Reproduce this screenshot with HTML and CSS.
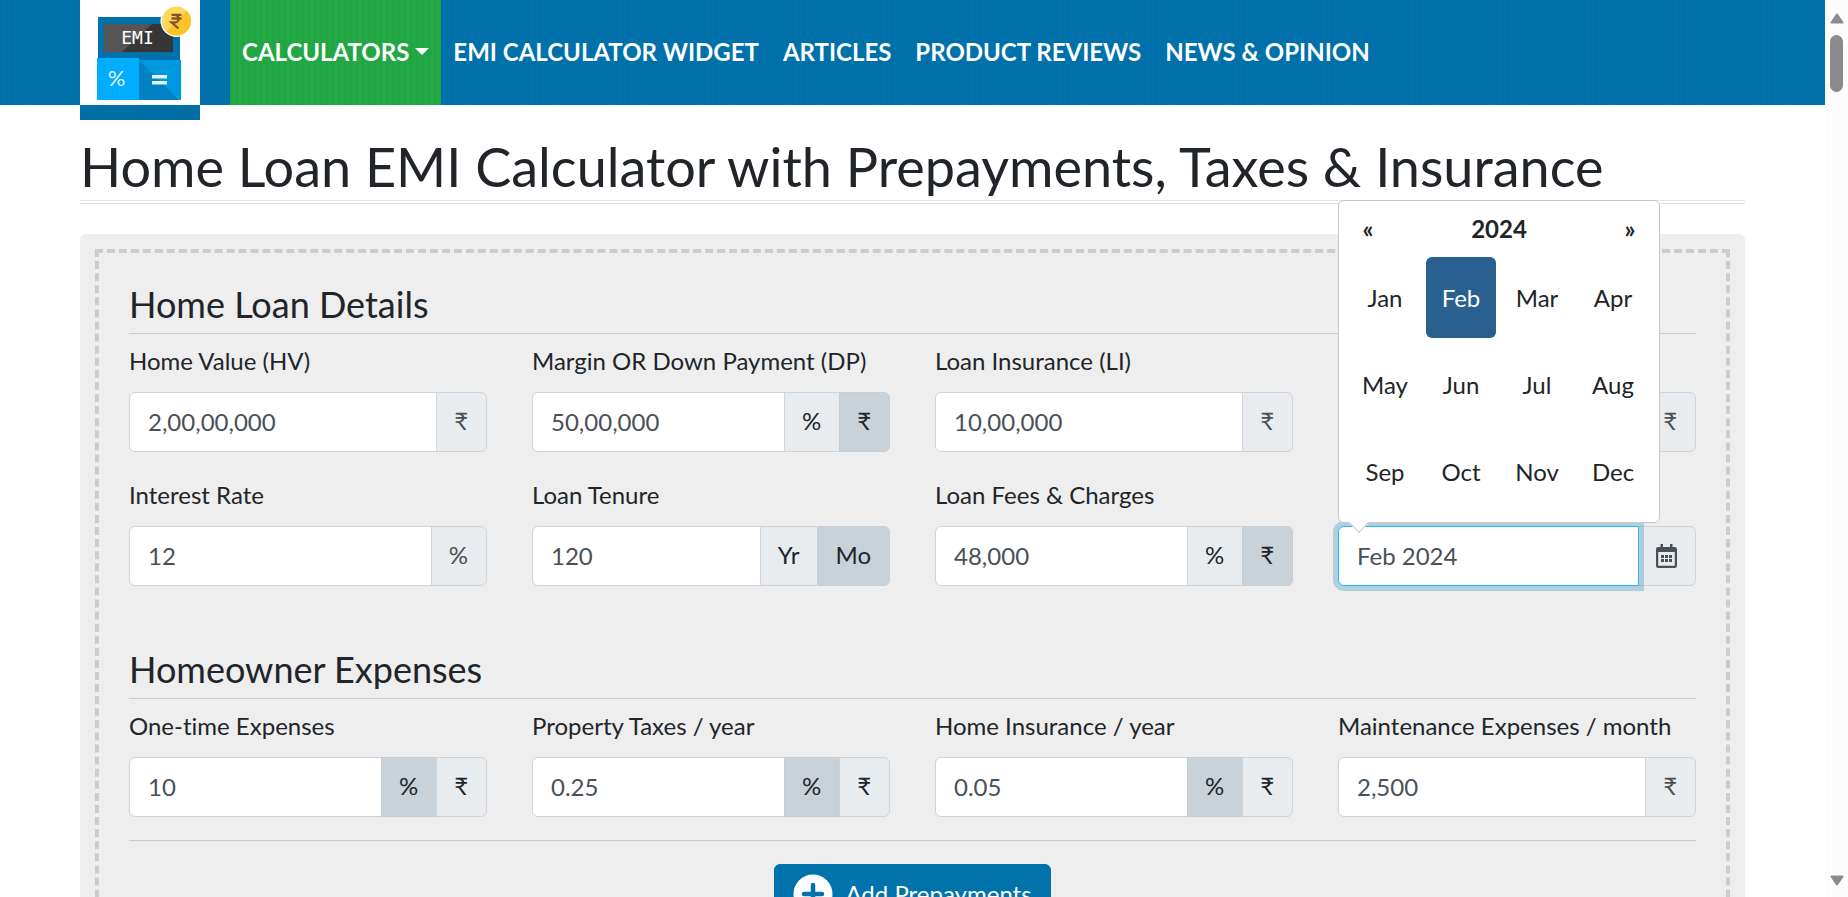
FILE: index.html
```html
<!DOCTYPE html>
<html lang="en">
<head>
<meta charset="utf-8">
<title>Home Loan EMI Calculator</title>
<link rel="stylesheet" href="styles.css">
</head>
<body>
<div class="page">
  <header class="site-header">
    <a class="brand" href="#" aria-label="EMI Calculator home">
      <svg class="brand-logo" viewBox="0 0 120 104" aria-hidden="true">
        <rect x="18" y="17" width="82" height="43" fill="#0070aa"/>
        <rect x="24" y="24" width="69" height="28" fill="#555"/>
        <path d="M72 24h21v28H42z" fill="#363636"/>
        <rect x="17" y="58" width="42" height="42" fill="#00adff"/>
        <rect x="59" y="60" width="42" height="40" fill="#0098e0"/>
        <path d="M59 60l40 40H59z" fill="#0081c2"/>
        <text x="57.500" y="44" class="logo-emi">EMI</text>
        <text x="36.500" y="86" class="logo-percent">%</text>
        <path d="M72 75h15v3.500H72zM72 81h15v3.500H72z" fill="#e4f3fc"/>
        <circle cx="96.500" cy="21" r="16" fill="#fff"/>
        <circle cx="96.500" cy="21" r="14.500" fill="#ffd85a"/>
        <path d="M107 11a14.500 14.500 0 0 1-20.500 20.500z" fill="#fcc324"/>
        <path d="M91.500 14.800h10M91.500 18.500h10M91.500 14.800h3c5.500 0 5.500 7.700 0 7.700h-3l7 6" fill="none" stroke="#845426" stroke-width="2.300"/>
      </svg>
    </a>
    <nav class="nav">
      <a class="nav-link nav-link-active" href="#">CALCULATORS<span class="caret"></span></a>
      <a class="nav-link" href="#">EMI CALCULATOR WIDGET</a>
      <a class="nav-link" href="#">ARTICLES</a>
      <a class="nav-link" href="#">PRODUCT REVIEWS</a>
      <a class="nav-link" href="#">NEWS &amp; OPINION</a>
    </nav>
  </header>
  <main class="content">
    <h1 class="title">Home Loan EMI Calculator with Prepayments, Taxes &amp; Insurance</h1>
    <div class="panel">
      <form class="calculator">
        <section class="section">
          <h2 class="section-title">Home Loan Details</h2>
          <div class="fields">
            <div class="field">
              <label class="label" for="home-value">Home Value (HV)</label>
              <div class="group"><input class="input" id="home-value" type="text" value="2,00,00,000"><span class="addon">₹</span></div>
            </div>
            <div class="field">
              <label class="label" for="down-payment">Margin OR Down Payment (DP)</label>
              <div class="group"><input class="input" id="down-payment" type="text" value="50,00,000"><button class="unit" type="button">%</button><button class="unit unit-on" type="button">₹</button></div>
            </div>
            <div class="field">
              <label class="label" for="loan-insurance">Loan Insurance (LI)</label>
              <div class="group"><input class="input" id="loan-insurance" type="text" value="10,00,000"><span class="addon">₹</span></div>
            </div>
            <div class="field">
              <label class="label" for="loan-amount">Loan Amount</label>
              <div class="group"><input class="input" id="loan-amount" type="text"><span class="addon">₹</span></div>
            </div>
            <div class="field">
              <label class="label" for="interest">Interest Rate</label>
              <div class="group"><input class="input" id="interest" type="text" value="12"><span class="addon">%</span></div>
            </div>
            <div class="field">
              <label class="label" for="tenure">Loan Tenure</label>
              <div class="group"><input class="input" id="tenure" type="text" value="120"><button class="unit" type="button">Yr</button><button class="unit unit-on" type="button">Mo</button></div>
            </div>
            <div class="field">
              <label class="label" for="fees">Loan Fees &amp; Charges</label>
              <div class="group"><input class="input" id="fees" type="text" value="48,000"><button class="unit" type="button">%</button><button class="unit unit-on" type="button">₹</button></div>
            </div>
            <div class="field">
              <label class="label" for="start-month">Start Month</label>
              <div class="group">
                <input class="input input-focus" id="start-month" type="text" value="Feb 2024">
                <span class="addon addon-icon">
                  <svg class="calendar-icon" viewBox="0 0 21 24" aria-hidden="true">
                    <path fill-rule="evenodd" d="M4.500 0h2.500v3h7V0h2.500v3h2.300A2.200 2.200 0 0 1 21 5.200v16.600a2.200 2.200 0 0 1-2.200 2.200H2.200A2.200 2.200 0 0 1 0 21.800V5.200A2.200 2.200 0 0 1 2.200 3h2.300zM2.200 8v13.200c0 .4.200.6.600.6h15.400c.4 0 .6-.2.600-.6V8z"/>
                    <path d="M5 11h3v3H5zM9 11h3v3H9zM13 11h3v3h-3zM5 15h3v3H5zM9 15h3v3H9zM13 15h3v3h-3z"/>
                  </svg>
                </span>
                <div class="picker">
                  <div class="picker-head">
                    <button class="picker-nav" type="button">«</button>
                    <span class="picker-year">2024</span>
                    <button class="picker-nav" type="button">»</button>
                  </div>
                  <div class="months">
                    <button class="month" type="button">Jan</button>
                    <button class="month month-on" type="button">Feb</button>
                    <button class="month" type="button">Mar</button>
                    <button class="month" type="button">Apr</button>
                    <button class="month" type="button">May</button>
                    <button class="month" type="button">Jun</button>
                    <button class="month" type="button">Jul</button>
                    <button class="month" type="button">Aug</button>
                    <button class="month" type="button">Sep</button>
                    <button class="month" type="button">Oct</button>
                    <button class="month" type="button">Nov</button>
                    <button class="month" type="button">Dec</button>
                  </div>
                </div>
              </div>
            </div>
          </div>
        </section>
        <section class="section">
          <h2 class="section-title">Homeowner Expenses</h2>
          <div class="fields">
            <div class="field">
              <label class="label" for="one-time">One-time Expenses</label>
              <div class="group"><input class="input" id="one-time" type="text" value="10"><button class="unit unit-on" type="button">%</button><button class="unit" type="button">₹</button></div>
            </div>
            <div class="field">
              <label class="label" for="taxes">Property Taxes / year</label>
              <div class="group"><input class="input" id="taxes" type="text" value="0.25"><button class="unit unit-on" type="button">%</button><button class="unit" type="button">₹</button></div>
            </div>
            <div class="field">
              <label class="label" for="home-insurance">Home Insurance / year</label>
              <div class="group"><input class="input" id="home-insurance" type="text" value="0.05"><button class="unit unit-on" type="button">%</button><button class="unit" type="button">₹</button></div>
            </div>
            <div class="field">
              <label class="label" for="maintenance">Maintenance Expenses / month</label>
              <div class="group"><input class="input" id="maintenance" type="text" value="2,500"><span class="addon">₹</span></div>
            </div>
          </div>
        </section>
        <div class="actions">
          <button class="add" type="button">
            <svg class="add-icon" viewBox="0 0 40 40" aria-hidden="true"><circle cx="20" cy="20" r="19.500" fill="#fff"/><path d="M20 11v18M11 20h18" stroke="#0073aa" stroke-width="4.500" stroke-linecap="round"/></svg>
            Add Prepayments
          </button>
        </div>
      </form>
    </div>
  </main>
</div>
<div class="scrollbar" aria-hidden="true">
  <svg class="scroll-arrow" viewBox="0 0 14 11"><path d="M7 1.500L12.500 9.500h-11z"/></svg>
  <div class="scroll-thumb"></div>
  <svg class="scroll-arrow scroll-down" viewBox="0 0 14 11"><path d="M7 9.500L1.500 1.500h11z"/></svg>
</div>
</body>
</html>
```
FILE: styles.css
```css
* {
  box-sizing: border-box;
}

body {
  display: grid;
  grid-template-columns: minmax(0, 1fr) 23px;
  height: 100vh;
  margin: 0;
  overflow: hidden;
  background: #fff;
  color: #212529;
  font: 24px/36px Lato, "Noto Sans", sans-serif;
  font-variant-ligatures: none;
}

button,
input {
  margin: 0;
  color: inherit;
  font: inherit;
}

.page {
  height: 100vh;
  overflow: hidden;
}

.site-header {
  display: flex;
  gap: 30px;
  height: 105px;
  padding: 0 80px;
  background:
    repeating-linear-gradient(90deg, rgba(0, 0, 0, 0.02) 0 2px, transparent 2px 6px, rgba(0, 0, 0, 0.01) 6px 8px, transparent 8px 11px),
    #0071aa;
}

.brand {
  flex: none;
  width: 120px;
  height: 120px;
  border-bottom: 15px solid #006ea5;
  background: #fff;
}

.brand-logo {
  display: block;
  width: 120px;
  height: 104px;
}

.logo-emi,
.logo-percent {
  fill: #fff;
  font-family: "DejaVu Sans Mono", monospace;
  font-size: 18px;
  text-anchor: middle;
}

.logo-percent {
  fill: #e4f3fc;
  font-family: Lato, sans-serif;
  font-size: 22px;
}

.nav {
  display: flex;
}

.nav-link {
  display: flex;
  align-items: center;
  padding: 0 12px 2px;
  color: #fff;
  font-weight: 700;
  text-decoration: none;
  white-space: nowrap;
}

.nav-link-active {
  background:
    repeating-linear-gradient(90deg, rgba(0, 0, 0, 0.02) 0 2px, transparent 2px 6px),
    #22a845;
}

.caret {
  margin-left: 6px;
  border: 7px solid transparent;
  border-top-color: #fff;
  border-bottom: 0;
}

.content {
  padding: 30px 80px 0;
}

.title {
  margin: 0 0 30px;
  padding-bottom: 2px;
  border-bottom: 4px double #e4e4e4;
  font-size: 54px;
  font-weight: 400;
  line-height: 63px;
}

.panel {
  padding: 15px;
  border-radius: 6px;
  background: #eee;
}

.calculator {
  padding: 30px;
  border: 4px dashed #ccc;
}

.section {
  margin-bottom: 62px;
}

.section:last-of-type {
  margin-bottom: 23px;
}

.section-title {
  margin: 0 0 10px;
  padding-bottom: 8px;
  border-bottom: 1px solid #ccc;
  font-size: 36px;
  font-weight: 400;
  line-height: 42px;
}

.fields {
  display: grid;
  grid-template-columns: repeat(4, minmax(0, 1fr));
  gap: 26px 45px;
}

.field {
  display: flex;
  flex-direction: column;
  gap: 14px;
}

.label {
  line-height: 34px;
  white-space: nowrap;
}

.group {
  position: relative;
  display: flex;
  height: 60px;
}

.input {
  flex: 1;
  min-width: 0;
  padding: 0 18px;
  border: 1px solid #ced4da;
  border-radius: 6px 0 0 6px;
  outline: 0;
  background: #fff;
  color: #495057;
}

.input-focus {
  z-index: 1;
  border-color: #2bb5ff;
  box-shadow: 0 0 0 5px rgba(0, 115, 170, 0.25);
}

.addon,
.unit {
  display: flex;
  align-items: center;
  justify-content: center;
  margin-left: -1px;
  padding: 0 18px 2px 17px;
  border: 1px solid #ced4da;
  background: #e9ecef;
}

.addon {
  color: #495057;
}

.addon-icon {
  padding-bottom: 0;
}

.addon:last-of-type,
.unit:last-of-type {
  border-radius: 0 6px 6px 0;
}

.unit-on {
  border-color: #c4ced6;
  background: #c9d1d9;
}

.calendar-icon {
  width: 21px;
  height: 24px;
  fill: #495057;
}

.picker {
  position: absolute;
  z-index: 2;
  bottom: calc(100% + 3px);
  left: 0;
  width: 322px;
  padding: 6px 8px 7px;
  border: 1px solid #c8c8c8;
  border-radius: 6px;
  background: #fff;
}

.picker::after {
  position: absolute;
  top: calc(100% - 6px);
  left: 13px;
  width: 13px;
  height: 13px;
  border: solid #c8c8c8;
  border-width: 0 1px 1px 0;
  background: #fff;
  content: "";
  transform: rotate(45deg);
}

.picker-head {
  display: grid;
  grid-template-columns: 42px 1fr 42px;
  align-items: center;
  height: 47px;
  padding-bottom: 4px;
  font-weight: 700;
  text-align: center;
}

.picker-nav {
  padding: 0;
  border: 0;
  background: none;
}

.months {
  display: grid;
  grid-template-columns: repeat(4, 1fr);
}

.month {
  height: 81px;
  margin: 3px;
  padding: 0;
  border: 0;
  border-radius: 6px;
  background: none;
}

.month-on {
  background: #29608f;
  color: #fff;
}

.actions {
  display: flex;
  justify-content: center;
  padding-top: 23px;
  border-top: 1px solid #ccc;
}

.add {
  display: flex;
  align-items: center;
  gap: 12px;
  height: 60px;
  padding: 0 18px;
  border: 1px solid #0073aa;
  border-radius: 6px;
  background: #0073aa;
  color: #fff;
}

.add-icon {
  width: 40px;
  height: 40px;
}

.scrollbar {
  display: flex;
  flex-direction: column;
  align-items: center;
  gap: 11px;
  padding: 13px 0 11px;
  background: #fcfcfc;
}

.scroll-arrow {
  width: 14px;
  height: 11px;
  fill: #8b8b8b;
  stroke: #8b8b8b;
  stroke-linejoin: round;
  stroke-width: 2px;
}

.scroll-thumb {
  width: 13px;
  height: 57px;
  border-radius: 7px;
  background: #8b8b8b;
}

.scroll-down {
  margin-top: auto;
}
```
